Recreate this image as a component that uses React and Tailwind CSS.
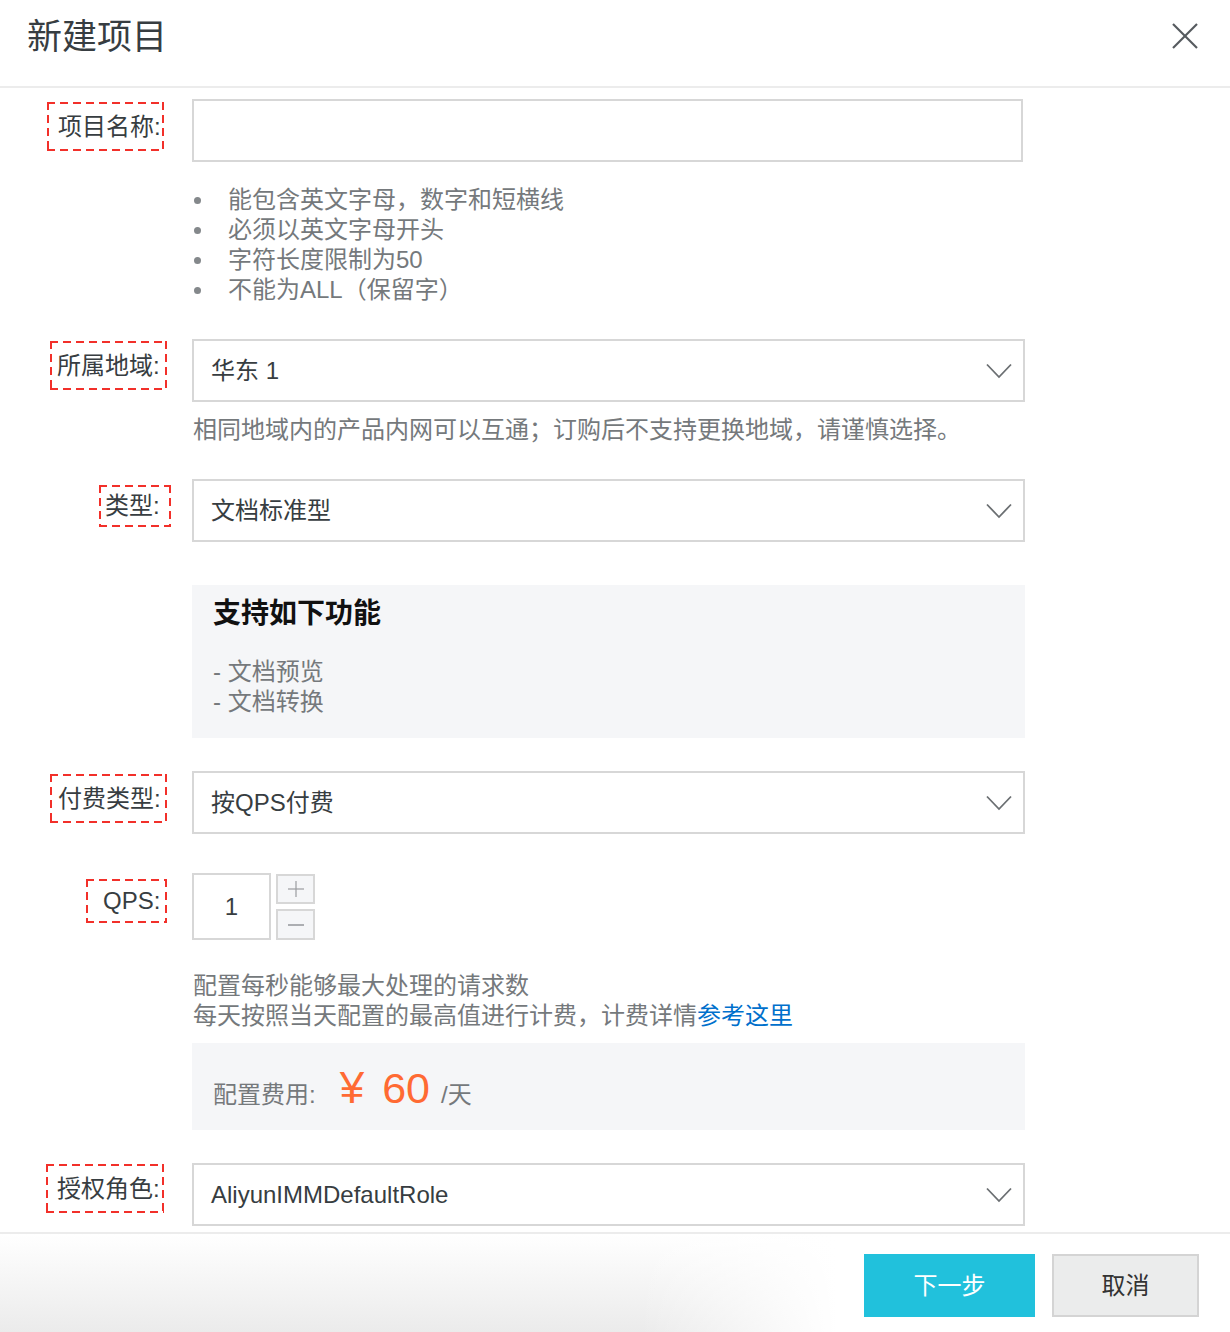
import React from "react";

const FONT = "font-['Liberation_Sans','Noto_Sans_CJK_SC',sans-serif]";

function Chevron() {
  return (
    <svg width="26" height="16" viewBox="0 0 26 16" fill="none">
      <polyline points="1,1.5 13,14 25,1.5" stroke="#6b6f72" strokeWidth="1.8" fill="none" />
    </svg>
  );
}

function Select({ value }) {
  return (
    <div className="h-[63px] w-[833px] border-2 border-[#d7d7d7] bg-white flex items-center justify-between pl-[17px] pr-[11px]">
      <span className="text-[24px] leading-[30px] text-[#373d41]">{value}</span>
      <Chevron />
    </div>
  );
}

const DASH =
  "[background:linear-gradient(to_right,#f2302a_62%,transparent_0)_top_left/13px_2px_repeat-x,linear-gradient(to_right,#f2302a_62%,transparent_0)_bottom_left/13px_2px_repeat-x,linear-gradient(to_bottom,#f2302a_62%,transparent_0)_top_left/2px_13px_repeat-y,linear-gradient(to_bottom,#f2302a_62%,transparent_0)_top_right/2px_13px_repeat-y]";

function Label({ text, boxClass }) {
  return (
    <div className="w-[192px] shrink-0 flex items-start">
      <div className={DASH + " flex items-center text-[24px] leading-[30px] text-[#373d41] whitespace-nowrap " + boxClass}>
        {text}
      </div>
    </div>
  );
}

export default function App() {
  return (
    <div className={"w-[1230px] h-[1332px] overflow-hidden bg-white flex flex-col " + FONT}>
      {/* Header */}
      <div className="h-[88px] shrink-0 border-b-2 border-[#ececec] flex items-start justify-between pl-[27px] pr-[32px]">
        <h1 className="pt-[17px] text-[35px] leading-[40px] text-[#373d41] font-normal">新建项目</h1>
        <div className="pt-[23px]">
          <svg width="26" height="26" viewBox="0 0 26 26">
            <line x1="1" y1="1" x2="25" y2="25" stroke="#555a5e" strokeWidth="2.2" />
            <line x1="25" y1="1" x2="1" y2="25" stroke="#555a5e" strokeWidth="2.2" />
          </svg>
        </div>
      </div>

      {/* Body */}
      <div className="flex flex-col flex-1">
        {/* 项目名称 */}
        <div className="flex mt-[11px]">
          <Label text="项目名称:" boxClass="ml-[47px] mt-[3px] w-[117px] h-[49px] pl-[11px]" />
          <div className="flex flex-col">
            <div className="h-[63px] w-[831px] border-2 border-[#d7d7d7] bg-white" />
            <ul className="mt-[23px] flex flex-col text-[24px] leading-[30px] text-[#75797c]">
              {["能包含英文字母，数字和短横线", "必须以英文字母开头", "字符长度限制为50", "不能为ALL（保留字）"].map((t) => (
                <li key={t} className="flex items-center">
                  <span className="ml-[2px] w-[7px] h-[7px] rounded-full bg-[#84888b]" />
                  <span className="ml-[27px]">{t}</span>
                </li>
              ))}
            </ul>
          </div>
        </div>

        {/* 所属地域 */}
        <div className="flex mt-[34px]">
          <Label text="所属地域:" boxClass="ml-[50px] mt-[2px] w-[117px] h-[49px] pl-[7px]" />
          <div className="flex flex-col">
            <Select value="华东 1" />
            <p className="mt-[13px] ml-[1px] text-[24px] leading-[30px] text-[#75797c] whitespace-nowrap">
              相同地域内的产品内网可以互通；订购后不支持更换地域，请谨慎选择。
            </p>
          </div>
        </div>

        {/* 类型 */}
        <div className="flex mt-[34px]">
          <Label text="类型:" boxClass="ml-[99px] mt-[6px] w-[72px] h-[42px] pl-[6px]" />
          <div className="flex flex-col">
            <Select value="文档标准型" />
            <div className="mt-[43px] w-[833px] h-[153px] bg-[#f5f6f8] pl-[21px] pt-[14px]">
              <div className="text-[28px] leading-[30px] font-bold text-[#111]">支持如下功能</div>
              <div className="mt-[28px] text-[24px] leading-[30px] text-[#75797c]">
                <div>- 文档预览</div>
                <div>- 文档转换</div>
              </div>
            </div>
          </div>
        </div>

        {/* 付费类型 */}
        <div className="flex mt-[33px]">
          <Label text="付费类型:" boxClass="ml-[50px] mt-[3px] w-[117px] h-[49px] pl-[8px]" />
          <Select value="按QPS付费" />
        </div>

        {/* QPS */}
        <div className="flex mt-[39px]">
          <Label text="QPS:" boxClass="ml-[86px] mt-[6px] w-[81px] h-[44px] pl-[17px]" />
          <div className="flex flex-col">
            <div className="flex">
              <div className="w-[79px] h-[67px] border-2 border-[#d7d7d7] flex items-center justify-center text-[24px] text-[#373d41]">1</div>
              <div className="ml-[5px] mt-[1px] flex flex-col gap-[5px]">
                <div className="w-[39px] h-[30px] border-2 border-[#d7d7d7] bg-[#f5f6f8] flex items-center justify-center">
                  <svg width="16" height="16" viewBox="0 0 16 16">
                    <line x1="0" y1="8" x2="16" y2="8" stroke="#9a9da0" strokeWidth="1.2" />
                    <line x1="8" y1="0" x2="8" y2="16" stroke="#9a9da0" strokeWidth="1.2" />
                  </svg>
                </div>
                <div className="w-[39px] h-[31px] border-2 border-[#d7d7d7] bg-[#f5f6f8] flex items-center justify-center">
                  <svg width="16" height="4" viewBox="0 0 16 4">
                    <line x1="0" y1="2" x2="16" y2="2" stroke="#9a9da0" strokeWidth="1.6" />
                  </svg>
                </div>
              </div>
            </div>
            <div className="mt-[31px] ml-[1px] text-[24px] leading-[30px] text-[#75797c] whitespace-nowrap">
              <div>配置每秒能够最大处理的请求数</div>
              <div>
                每天按照当天配置的最高值进行计费，计费详情<span className="text-[#0070cc]">参考这里</span>
              </div>
            </div>
            <div className="mt-[12px] w-[833px] h-[87px] bg-[#f5f6f8] flex items-baseline pl-[21px] pt-[23px]">
              <span className="text-[24px] leading-none text-[#75797c]">配置费用:</span>
              <span className="ml-[24px] text-[44px] leading-none text-[#ff6a33]">¥</span>
              <span className="ml-[18px] text-[43px] leading-none text-[#ff6a33]">60</span>
              <span className="ml-[11px] text-[24px] leading-none text-[#75797c]">/天</span>
            </div>
          </div>
        </div>

        {/* 授权角色 */}
        <div className="flex mt-[33px]">
          <Label text="授权角色:" boxClass="ml-[46px] mt-[1px] w-[118px] h-[49px] pl-[11px]" />
          <Select value="AliyunIMMDefaultRole" />
        </div>
      </div>

      {/* Footer */}
      <div className="h-[100px] shrink-0 border-t-2 border-[#ececec] bg-[linear-gradient(to_right,rgba(255,255,255,0)_52%,#ffffff_68%),linear-gradient(to_bottom,#ffffff,#ebebeb)] flex items-start justify-end pt-[20px] pr-[31px] gap-[17px]">
        <button className="w-[171px] h-[63px] bg-[#21c1dc] text-white text-[24px] leading-none">下一步</button>
        <button className="w-[147px] h-[63px] bg-[#ebecec] border-2 border-[#d4d4d4] text-[#333] text-[24px] leading-none">取消</button>
      </div>
    </div>
  );
}
